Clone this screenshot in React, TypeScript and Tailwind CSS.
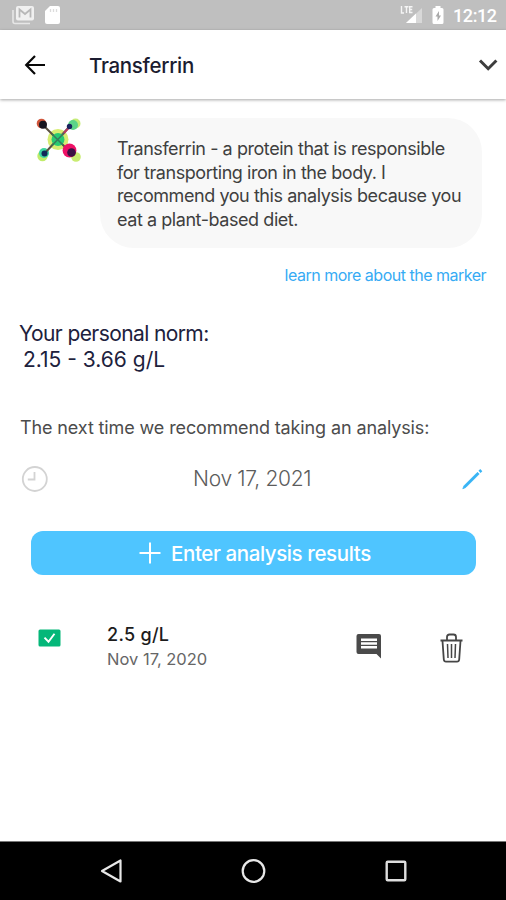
import type { ReactNode } from "react";

function StatusBar() {
    return (
        <div className="flex h-[30px] shrink-0 items-center bg-[#bfbfbf] pl-3 pr-[9px] text-white">
            {/* Mail */}
            <svg className="h-[20px] w-[23px]" viewBox="0 0 23 20" fill="none">
                <path d="M1 5v11.5q0 2 2 2h15" stroke="#e6e6e6" strokeWidth="1.6" />
                <rect x="4" y="1" width="18" height="14.5" rx="2" fill="#f0f0f0" />
                <path d="M7.500 12.500V4.500l5.500 4.500 5.500-4.500v8" stroke="#b8b8b8" strokeWidth="1.800" />
            </svg>
            {/* SD card */}
            <svg className="ml-[9px] h-[20px] w-[17px]" viewBox="0 0 17 20">
                <path d="M6 1h8q2 0 2 2v14q0 2-2 2H3q-2 0-2-2V6z" fill="#fff" />
                <path d="M6.500 4v3M9.500 4v3M12.500 4v3" stroke="#dcdcdc" strokeWidth="1.3" />
            </svg>
            <svg className="ml-auto h-[20px] w-[23px]" viewBox="0 0 23 20" fill="none">
                <path d="M22 3v15H6z" fill="#d8d8d8" />
                <path d="M16 8.500V18H6z" fill="#fff" />
                <path d="M1.500 1v7H4M4.500 1.700h4M6.500 1.700V8M12.500 1.700H9.700V7.500h2.800M9.700 4.500h2.500" stroke="#f5f5f5" strokeWidth="1.400" />
            </svg>
            <svg className="ml-[9px] h-[20px] w-[12px]" viewBox="0 0 12 20">
                <path d="M3.500 1h5v2H10q1.500 0 1.500 1.500v13Q11.500 19 10 19H2Q.5 19 .5 17.500v-13Q.5 3 2 3h1.500z" fill="#fff" />
                <path d="M7 6 3.500 11.500h2V16L9 10.500H7z" fill="#aaa" />
            </svg>
            <span className="ml-[9px] w-[44px] whitespace-nowrap font-[Roboto] text-[18px] font-medium leading-[31px] tracking-[-0.4px]">12:12</span>
        </div>
    );
}

function Header() {
    return (
        <div className="relative flex h-[69px] shrink-0 items-center bg-white pl-6 pr-[8px] shadow-[0_1px_3px_rgba(0,0,0,0.35)]">
            <svg className="h-[22px] w-[22px]" viewBox="0 0 22 22" fill="none" stroke="#080808" strokeWidth="2.2">
                <path d="M21 11H2.500M11 2 2.200 11 11 20" />
            </svg>
            <h1 className="ml-[43px] mt-[3px] whitespace-nowrap text-[20.5px] font-medium tracking-[-0.3px] text-[#1b1c30]">Transferrin</h1>
            <svg className="ml-auto h-[12px] w-[20px]" viewBox="0 0 20 12" fill="none" stroke="#3d3d3d" strokeWidth="3">
                <path d="M2 1.500 10.200 9.700 18.400 1.500" />
            </svg>
        </div>
    );
}

function Logo() {
    return (
        <svg className="h-[48px] w-[48px]" viewBox="0 0 48 48">
            <circle cx="23" cy="21.500" r="10.500" fill="#d6ed72" />
            <circle cx="40.500" cy="5.500" r="5" fill="#c5ec78" />
            <circle cx="38" cy="7" r="5" fill="#5cd488" />
            <circle cx="7.500" cy="38" r="5.200" fill="#c0ec6a" />
            <circle cx="9" cy="35" r="5" fill="#3fd5a0" />
            <circle cx="41" cy="39" r="4.800" fill="#c9ec72" />
            <circle cx="6.500" cy="5.500" r="4.800" fill="#d0553a" />
            <path d="m8 7 28 28M9 36 36 7" stroke="#5b5142" strokeWidth="2" />
            <path d="m25 19.500 9-10" stroke="#b83c62" strokeWidth="2" />
            <circle cx="23" cy="21.500" r="6.500" fill="#28ca72" />
            <path d="m17 16 11 11M17 27.500 29 15" stroke="#38795a" strokeWidth="1.500" />
            <circle cx="8" cy="6.800" r="4" fill="#17151f" />
            <circle cx="34.500" cy="8.500" r="2.700" fill="#18245e" />
            <circle cx="9.500" cy="35.500" r="3" fill="#122858" />
            <circle cx="34.500" cy="32.500" r="6.900" fill="#ee1166" />
            <circle cx="36.500" cy="34.500" r="4.300" fill="#3b1045" />
        </svg>
    );
}

function IconButton({ label, className, children }: { label: string; className: string; children: ReactNode }) {
    return (
        <button aria-label={label} className={className}>
            {children}
        </button>
    );
}

function ResultRow() {
    return (
        <div className="mt-[46px] flex h-[54px] items-start pl-[38px]">
            <svg className="mt-[8px] h-[18px] w-[23px]" viewBox="0 0 23 18">
                <rect x=".5" y=".5" width="22" height="17" rx="1.500" fill="#04b779" />
                <path d="m6.500 8.700 4 4 6-8" fill="none" stroke="#fff" strokeWidth="1.900" />
            </svg>
            <div className="ml-[46px] mt-px w-[249px] whitespace-nowrap">
                <p className="text-[18px] font-medium leading-[26px] tracking-[0.3px] text-[#1c1c1c]">2.5 g/L</p>
                <p className="text-[16.5px] leading-[23px] text-[#666]">Nov 17, 2020</p>
            </div>
            <IconButton label="Comment" className="mt-[12px]">
                <svg className="h-[27px] w-[26px]" viewBox="0 0 26 27">
                    <path d="M2.500 1h20.500q2 0 2 2v22.500L20.500 21H2.500q-2 0-2-2V3q0-2 2-2z" fill="#4a4a4a" />
                    <path d="M5 6.800h16M5 10.500h16M5 14.300h16" stroke="#fff" strokeWidth="2.500" />
                </svg>
            </IconButton>
            <IconButton label="Delete" className="ml-[58px] mt-[12px]">
                <svg className="h-[30px] w-[24px]" viewBox="0 0 24 30" fill="none" stroke="#464646" strokeWidth="1.800">
                    <path d="M.5 7.500h22M7 7V4q0-2.500 2.500-2.500h4q2.500 0 2.500 2.500v3" />
                    <path d="m2.500 8 1.300 18.500q.2 2.200 2.200 2.200h11q2 0 2.200-2.200L20.500 8" />
                    <path d="m7.500 11 .5 14M11.500 11v14M15.500 11l-.5 14" strokeWidth="1.500" />
                </svg>
            </IconButton>
        </div>
    );
}

function NavBar() {
    return (
        <div className="flex h-[59px] shrink-0 items-center bg-black pl-[100px] pr-[98px] border-t border-[#777]">
            <svg className="h-[26px] w-[24px]" viewBox="0 0 24 26" fill="none" stroke="#e8e8e8" strokeWidth="2.200" strokeLinejoin="round">
                <path d="M2 13 20.500 2.500v21z" />
            </svg>
            <svg className="mx-auto h-[26px] w-[26px]" viewBox="0 0 26 26" fill="none" stroke="#e8e8e8" strokeWidth="2.200">
                <circle cx="12.500" cy="13" r="10.800" />
            </svg>
            <svg className="h-[24px] w-[24px]" viewBox="0 0 24 24" fill="none" stroke="#dedede" strokeWidth="2.400">
                <rect x="2.700" y="2.700" width="18.600" height="18.600" rx="1" />
            </svg>
        </div>
    );
}

export default function App() {
    return (
        <div className="flex h-[900px] w-[506px] flex-col overflow-hidden bg-white font-[Inter,sans-serif]">
            <StatusBar />
            <Header />

            <main className="flex-1">
                {/* Assistant message */}
                <div className="flex pl-[35px] pt-[19px]">
                    <Logo />
                    <div className="ml-[17px] h-[130px] w-[382px] rounded-[34px] rounded-tl-none bg-[#f8f8f8] pl-[17px] pt-[19px]">
                        <p className="whitespace-nowrap text-[18px] leading-[23.5px] tracking-[-0.44px] text-[#3f3f3f]">
                            Transferrin - a protein that is responsible
                            <br />
                            for transporting iron in the body. I
                            <br />
                            recommend you this analysis because you
                            <br />
                            eat a plant-based diet.
                        </p>
                    </div>
                </div>
                <a className="mt-[15px] block pr-[20px] text-right text-[16px] leading-[24px] tracking-[-0.5px] text-[#36abf4]">
                    learn more about the marker
                </a>

                {/* Norm */}
                <div className="mt-[34px] pl-[19px] text-[21px] leading-[26px] text-[#20213c]">
                    <p className="tracking-[-0.6px]">Your personal norm:</p>
                    <p className="pl-[4px]">2.15 - 3.66 g/L</p>
                </div>

                <p className="mt-[42px] whitespace-nowrap pl-[20px] text-[18px] leading-[26px] tracking-[-0.12px] text-[#4c4c4c]">
                    The next time we recommend taking an analysis:
                </p>
                <div className="mt-[22px] flex h-[32px] items-center pl-[21px] pr-[22px]">
                    <svg className="h-[28px] w-[28px]" viewBox="0 0 28 28" fill="none" stroke="#d3d3d3" strokeWidth="1.800">
                        <circle cx="13.800" cy="14" r="12" />
                        <path d="M13.500 7v7.500H6.800" />
                    </svg>
                    <span className="ml-[144px] whitespace-nowrap text-[21px] font-light tracking-[-0.3px] text-[#5c5c5c]">Nov 17, 2021</span>
                    <svg className="ml-auto h-[22px] w-[22px]" viewBox="0 0 22 22" fill="none" stroke="#38b4f5">
                        <path d="M.8 20.700 2 17.800 15.500 4.300 17.200 6 3.700 19.500z" fill="#38b4f5" strokeWidth=".8" />
                        <path d="m17.500 3.800 1.800-1.700" strokeWidth="3" />
                    </svg>
                </div>

                <button className="mx-[31px] mt-[36px] flex h-[44px] w-[445px] items-center rounded-[12px] bg-[#4fc5ff] pl-[108px] text-white">
                    <svg className="h-[22px] w-[22px]" viewBox="0 0 22 22" fill="none" stroke="#fff" strokeWidth="2">
                        <path d="M11 .5v21M.5 11h21" />
                    </svg>
                    <span className="ml-[10px] mt-[2px] whitespace-nowrap text-[20.5px] font-medium tracking-[-0.4px]">Enter analysis results</span>
                </button>

                <ResultRow />
            </main>

            <NavBar />
        </div>
    );
}
